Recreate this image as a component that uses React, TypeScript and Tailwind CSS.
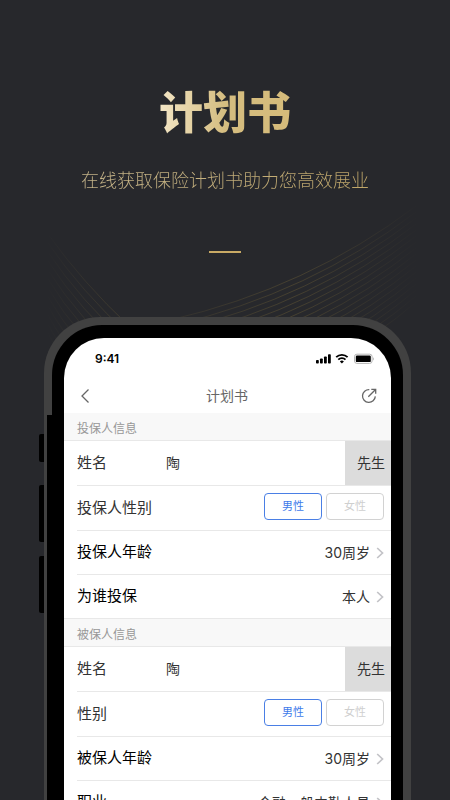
// src/App.tsx
import React from 'react';

type Gender = '男性' | '女性';

// Background line waves, one entry per line
const rightWaves = Array.from({ length: 17 }, (_, i) => i);
const leftWaves = Array.from({ length: 12 }, (_, i) => i);

const Waves: React.FC = () => (
  <svg
    className="absolute left-0 top-0 h-[400px] w-full"
    viewBox="0 0 450 400"
    preserveAspectRatio="none"
    fill="none"
    aria-hidden="true"
  >
    <defs>
      <linearGradient id="fadeRight" gradientUnits="userSpaceOnUse" x1="170" y1="0" x2="418" y2="0">
        <stop offset="0" stopColor="#6b5d35" stopOpacity="0.15" />
        <stop offset="0.5" stopColor="#6b5d35" stopOpacity="0.45" />
        <stop offset="1" stopColor="#6b5d35" stopOpacity="0" />
      </linearGradient>
      <linearGradient id="fadeLeft" gradientUnits="userSpaceOnUse" x1="46" y1="0" x2="120" y2="0">
        <stop offset="0" stopColor="#6b5d35" stopOpacity="0" />
        <stop offset="1" stopColor="#6b5d35" stopOpacity="0.35" />
      </linearGradient>
    </defs>
    {rightWaves.map((i) => (
      <path
        key={i}
        d={`M${170 + i * 4} ${320 + i * 5} Q${308 + i * 2} ${288 + i * 5} 416 ${206 + i * 6}`}
        stroke="url(#fadeRight)"
      />
    ))}
    {leftWaves.map((i) => (
      <path
        key={i}
        d={`M48 ${234 + i * 9} Q${82 - i} ${282 + i * 9} 130 ${327 + i * 9}`}
        stroke="url(#fadeLeft)"
      />
    ))}
  </svg>
);

const StatusIcons: React.FC = () => (
  <svg className="h-3 w-[59px]" viewBox="0 0 59 12" aria-hidden="true">
    {/* Signal */}
    <rect x="0" y="7" width="2.8" height="3.5" rx="0.8" />
    <rect x="4" y="5.5" width="2.8" height="5" rx="0.8" />
    <rect x="8" y="3.4" width="2.8" height="7.1" rx="0.8" />
    <rect x="12" y="1.3" width="2.8" height="9.2" rx="0.8" />
    {/* Wifi */}
    <g fill="none" stroke="#000" strokeWidth="1.8">
      <path d="M20.2 4.2a8 8 0 0 1 11.4 0" />
      <path d="M22.3 6.7a5 5 0 0 1 7.2 0" />
    </g>
    <path d="M25.9 10.4 23.9 8.4a2.9 2.9 0 0 1 4 0z" />
    {/* Battery */}
    <rect x="38.5" y="1.2" width="17.6" height="9.2" rx="2.4" fill="none" stroke="#b5b5b5" />
    <rect x="39.800" y="2.5" width="15" height="6.6" rx="1.2" />
    <path d="M57.2 4.2c1.2.5 1.2 2.700 0 3.200z" fill="#b5b5b5" />
  </svg>
);

const Chevron: React.FC = () => (
  <svg
    className="h-3 w-2"
    viewBox="0 0 8 12"
    fill="none"
    stroke="#c3c3c7"
    strokeWidth="1.7"
    aria-hidden="true"
  >
    <path d="M1.200 1 6.500 6 1.200 11" />
  </svg>
);

const SectionTitle: React.FC<{ title: string }> = ({ title }) => (
  <h3 className="flex h-7 shrink-0 items-center border-b border-[#e8e8e8] bg-[#f8f8f8] pl-[13px] pt-1 text-xs text-[#979797]">
    {title}
  </h3>
);

const NameRow: React.FC<{ id: string }> = ({ id }) => (
  <div className="ml-[13px] flex h-[45px] shrink-0 items-stretch border-b border-[#e8e8e8] text-[#333]">
    <label htmlFor={id} className="flex w-[89px] items-center">
      姓名
    </label>
    <input id={id} defaultValue="陶" className="min-w-0 flex-1 bg-transparent text-sm outline-none" />
    <button type="button" className="w-[46px] shrink-0 bg-[#dcdcdc] pl-[6px] text-sm">
      先生
    </button>
  </div>
);

const GenderRow: React.FC<{ label: string }> = ({ label }) => {
  const [gender, setGender] = React.useState<Gender>('男性');

  return (
    <div className="ml-[13px] flex h-[45px] shrink-0 items-center justify-between border-b border-[#e8e8e8] pr-[7px] text-[#333]">
      <span>{label}</span>
      <div className="flex gap-1 pb-1">
        {(['男性', '女性'] as Gender[]).map((item) => (
          <button
            key={item}
            type="button"
            aria-pressed={gender === item}
            onClick={() => setGender(item)}
            className={`h-[27px] w-[58px] rounded-[4px] border text-[11px] ${
              gender === item ? 'border-[#4a7fe5] text-[#3f7bea]' : 'border-[#d2d2d2] text-[#cfcfcf]'
            }`}
          >
            {item}
          </button>
        ))}
      </div>
    </div>
  );
};

const LinkRow: React.FC<{ label: string; value: string; last?: boolean }> = ({ label, value, last }) => (
  <button
    type="button"
    className={`flex h-11 shrink-0 items-center border-b border-[#e8e8e8] pr-[7px] ${
      last ? 'pl-[13px]' : 'ml-[13px]'
    }`}
  >
    <span className="flex-1 text-left text-black">{label}</span>
    <span className="mr-[6px] font-['Inter','Noto_Sans_CJK_SC',sans-serif] text-sm text-[#333]">{value}</span>
    <Chevron />
  </button>
);

const App: React.FC = () => {
  return (
    <div className="relative flex h-screen flex-col overflow-hidden bg-[#27282c] font-['Liberation_Sans','Noto_Sans_CJK_SC',sans-serif]">
      <Waves />

      {/* Tiêu đề */}
      <header className="relative flex h-[317px] shrink-0 flex-col items-center pt-[86px]">
        <h1 className="bg-linear-to-r from-[#f3e6c6] via-[#d5bd80] to-[#d5bb7a] bg-clip-text text-[44px] font-black leading-[56px] text-transparent">
          计划书
        </h1>
        <p className="mt-[25px] bg-linear-to-r from-[#c9b88d] to-[#bfa668] bg-clip-text text-lg font-light leading-7 text-transparent">
          在线获取保险计划书助力您高效展业
        </p>
        <div className="mt-14 h-[2px] w-8 bg-[#c9aa65]" />
      </header>

      {/* Điện thoại */}
      <main className="relative ml-11 mr-[39px] flex min-h-0 flex-1 flex-col rounded-t-[56px] bg-[#414141] px-2 pt-2">
        <div className="absolute -left-[5px] top-[117px] h-7 w-[5px] rounded-l-[2px] bg-black" />
        <div className="absolute -left-[5px] top-[168px] h-[57px] w-[5px] rounded-l-[2px] bg-black" />
        <div className="absolute -left-[5px] top-[239px] h-[57px] w-[5px] rounded-l-[2px] bg-black" />
        <div className="absolute bottom-0 left-[3px] top-[98px] w-[5px] bg-black" />

        <div className="flex min-h-0 flex-1 flex-col rounded-t-[50px] bg-black px-3 pt-[13px]">
          <div className="flex min-h-0 flex-1 flex-col overflow-hidden rounded-t-[40px] bg-white text-[15px]">
            <div className="flex h-[42px] shrink-0 items-center justify-between pl-[31px] pr-4">
              <span className="font-['Inter',sans-serif] text-xs font-semibold text-black">9:41</span>
              <StatusIcons />
            </div>

            <nav className="flex h-[33px] shrink-0 items-center justify-between pb-[2px] pl-[17px] pr-[14px]">
              <button type="button" aria-label="返回">
                <svg className="h-4 w-3" viewBox="0 0 12 16" fill="none" stroke="#666" strokeWidth="1.3">
                  <path d="M7.500 1.500 1 8l6.500 6.500" />
                </svg>
              </button>
              <h2 className="text-sm text-[#666]">计划书</h2>
              <button type="button" aria-label="分享">
                <svg className="h-4 w-4" viewBox="0 0 16 16" fill="none" stroke="#666" strokeWidth="1.300">
                  <path d="M8.300 1.600A6.400 6.400 0 1 0 14.300 8.400M7.300 8.700 14.300 1.700M10.300 1.300h4.400v4.400" />
                </svg>
              </button>
            </nav>

            <SectionTitle title="投保人信息" />
            <NameRow id="holder" />
            <GenderRow label="投保人性别" />
            <LinkRow label="投保人年龄" value="30周岁" />
            <LinkRow label="为谁投保" value="本人" last />

            <SectionTitle title="被保人信息" />
            <NameRow id="insured" />
            <GenderRow label="性别" />
            <LinkRow label="被保人年龄" value="30周岁" />
            <LinkRow label="职业" value="金融一般内勤人员" />
          </div>
        </div>
      </main>
    </div>
  );
};

export default App;
